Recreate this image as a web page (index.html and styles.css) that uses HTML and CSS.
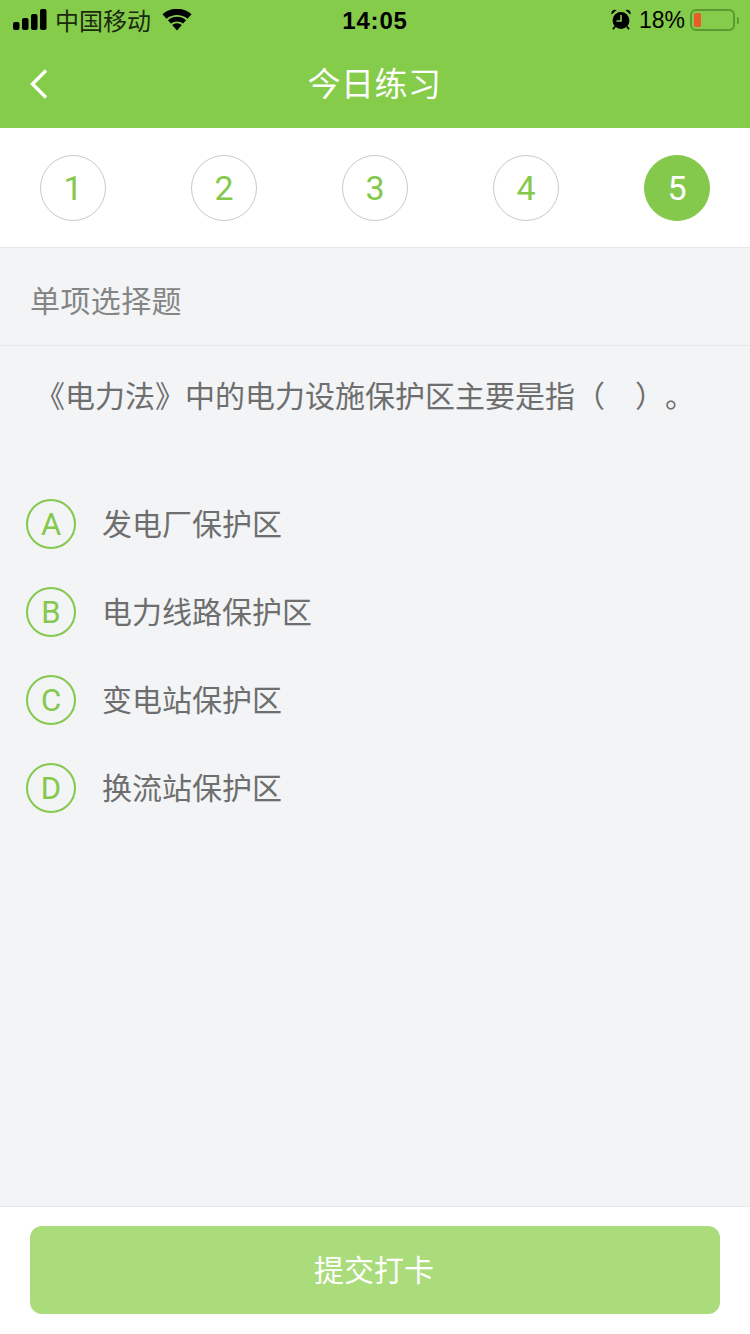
FILE: index.html
```html
<!DOCTYPE html>
<html lang="zh-CN">
<head>
    <meta charset="UTF-8">
    <meta name="viewport" content="width=device-width, initial-scale=1.0">
    <title>今日练习</title>
    <link rel="stylesheet" href="styles.css">
</head>
<body>
    <div class="page">
        <header class="top">
            <div class="status">
                <div class="status-left">
                    <svg class="signal" width="34" height="21" viewBox="0 0 34 21">
                        <rect x="0" y="13" width="6.500" height="8" rx="2"/>
                        <rect x="9" y="9" width="6.500" height="12" rx="2"/>
                        <rect x="18" y="5" width="6.500" height="16" rx="2"/>
                        <rect x="27" y="0" width="6.500" height="21" rx="2"/>
                    </svg>
                    <span class="carrier">中国移动</span>
                    <svg class="wifi" width="30" height="22" viewBox="0 0 30 22">
                        <path d="M15 21.500l-4.800-5.400a7 7 0 0 1 9.600 0z"/>
                        <path d="M8.900 14.600l-3-3.400a14 14 0 0 1 18.200 0l-3 3.400a9.600 9.600 0 0 0-12.200 0z"/>
                        <path d="M4.500 9.700L.5 5.200a22 22 0 0 1 29 0l-4 4.500a16.500 16.500 0 0 0-21 0z"/>
                    </svg>
                </div>
                <span class="clock">14:05</span>
                <div class="status-right">
                    <svg class="alarm" width="20" height="21" viewBox="0 0 20 21">
                        <path d="M.6 5.500a3.600 3.600 0 0 1 5-4.400zM19.400 5.500a3.600 3.600 0 0 0-5-4.400z"/>
                        <circle cx="10" cy="11.500" r="8.400"/>
                        <path d="M10 6V12H5.500" fill="none" stroke="#86cc4b" stroke-width="1.600"/>
                        <path d="M4 17.500l-2 2.800M16 17.500l2 2.800" stroke="#000" stroke-width="1.800"/>
                    </svg>
                    <span class="percent">18%</span>
                    <div class="battery"><span class="battery-level"></span></div>
                    <span class="battery-cap"></span>
                </div>
            </div>
            <nav class="nav">
                <svg class="back" width="20" height="32" viewBox="0 0 20 32">
                    <path d="M17 2.500L3.500 16 17 29.500" fill="none" stroke="#fff" stroke-width="3.400"/>
                </svg>
                <h1 class="nav-title">今日练习</h1>
            </nav>
        </header>

        <div class="steps">
            <span class="step">1</span>
            <span class="step">2</span>
            <span class="step">3</span>
            <span class="step">4</span>
            <span class="step active">5</span>
        </div>

        <main class="content">
            <div class="qtype">单项选择题</div>
            <p class="question">《电力法》中的电力设施保护区主要是指（<span class="blank"></span>）<span class="tail">。</span></p>
            <ul class="options">
                <li class="option"><span class="letter">A</span><span class="label">发电厂保护区</span></li>
                <li class="option"><span class="letter">B</span><span class="label">电力线路保护区</span></li>
                <li class="option"><span class="letter">C</span><span class="label">变电站保护区</span></li>
                <li class="option"><span class="letter">D</span><span class="label">换流站保护区</span></li>
            </ul>
        </main>

        <footer class="bottom">
            <button class="submit" type="button">提交打卡</button>
        </footer>
    </div>
</body>
</html>
```

FILE: styles.css
```css
* {
    box-sizing: border-box;
    margin: 0;
    padding: 0;
    font-family: "Liberation Sans", "Noto Sans CJK SC", sans-serif;
}

body {
    background-color: #f2f4f6;
}

.page {
    width: 750px;
    height: 1334px;
    display: flex;
    flex-direction: column;
    overflow: hidden;
}

/* green header */
.top {
    height: 128px;
    background-color: #86cc4b;
}

.status {
    height: 40px;
    padding: 0 11px 0 13px;
    display: flex;
    align-items: center;
    justify-content: space-between;
    color: #000;
    position: relative;
}

.status-left,
.status-right {
    display: flex;
    align-items: center;
}

.signal {
    margin: -2px 8px 0 0;
}

.carrier {
    font-size: 24px;
    line-height: 40px;
    margin: 4px 11px 0 0;
    color: #1a2a10;
}

.clock {
    position: absolute;
    left: 0;
    right: 0;
    top: 7px;
    text-align: center;
    font-size: 24px;
    font-weight: bold;
    letter-spacing: 0.800px;
}

.alarm {
    margin: -2px 8px 0 0;
}

.percent {
    font-size: 23px;
    margin-right: 5px;
}

.battery {
    width: 45px;
    height: 22px;
    border: 2px solid #5a9a33;
    border-radius: 6px;
    padding: 2px;
}

.battery-level {
    display: block;
    width: 7px;
    height: 14px;
    border-radius: 2px;
    background-color: #ea5a2a;
}

.battery-cap {
    width: 2px;
    height: 7px;
    margin-left: 2px;
    border-radius: 0 2px 2px 0;
    background-color: #5a9a33;
}

.nav {
    height: 88px;
    display: flex;
    align-items: center;
    justify-content: center;
    position: relative;
}

.back {
    position: absolute;
    left: 29px;
    top: 28px;
}

.nav-title {
    font-size: 33px;
    font-weight: normal;
    color: #fff;
    letter-spacing: 0.500px;
    margin: -5px 1px 0 0;
}

/* step circles */
.steps {
    height: 120px;
    padding: 0 40px;
    display: flex;
    align-items: center;
    justify-content: space-between;
    background-color: #fff;
    border-bottom: 1px solid #e6e6e6;
}

.step {
    width: 66px;
    height: 66px;
    border: 1px solid #c9c9c9;
    border-radius: 50%;
    display: flex;
    align-items: center;
    justify-content: center;
    font-family: Roboto, "Liberation Sans", sans-serif;
    font-size: 34px;
    color: #84c94c;
}

.step.active {
    border-color: #84c94c;
    background-color: #84c94c;
    color: #fff;
}

/* question */
.content {
    flex: 1;
}

.qtype {
    height: 98px;
    padding: 5px 0 0 30px;
    display: flex;
    align-items: center;
    border-bottom: 1px solid #e6e7e9;
    font-size: 30px;
    letter-spacing: 0.400px;
    color: #858585;
}

.question {
    padding: 28px 0 0 35px;
    font-size: 30px;
    line-height: 46px;
    color: #6e6e6e;
}

.blank {
    display: inline-block;
    width: 30px;
}

.tail {
    margin-left: 15px;
}

.options {
    list-style: none;
    margin-top: 60px;
    padding-left: 26px;
}

.option {
    height: 88px;
    display: flex;
    align-items: center;
}

.letter {
    width: 50px;
    height: 50px;
    border: 2px solid #84c94c;
    border-radius: 50%;
    display: flex;
    align-items: center;
    justify-content: center;
    font-family: Roboto, "Liberation Sans", sans-serif;
    font-size: 31px;
    color: #84c94c;
    margin-right: 26px;
}

.label {
    font-size: 30px;
    color: #6e6e6e;
    margin-bottom: 4px;
}

/* submit bar */
.bottom {
    height: 128px;
    padding: 19px 30px 0;
    background-color: #fff;
    border-top: 1px solid #e6e7e9;
}

.submit {
    width: 100%;
    height: 88px;
    padding: 0 2px 4px 0;
    border: none;
    border-radius: 12px;
    background-color: #aadc7b;
    color: #fff;
    font-size: 30px;
}
```
